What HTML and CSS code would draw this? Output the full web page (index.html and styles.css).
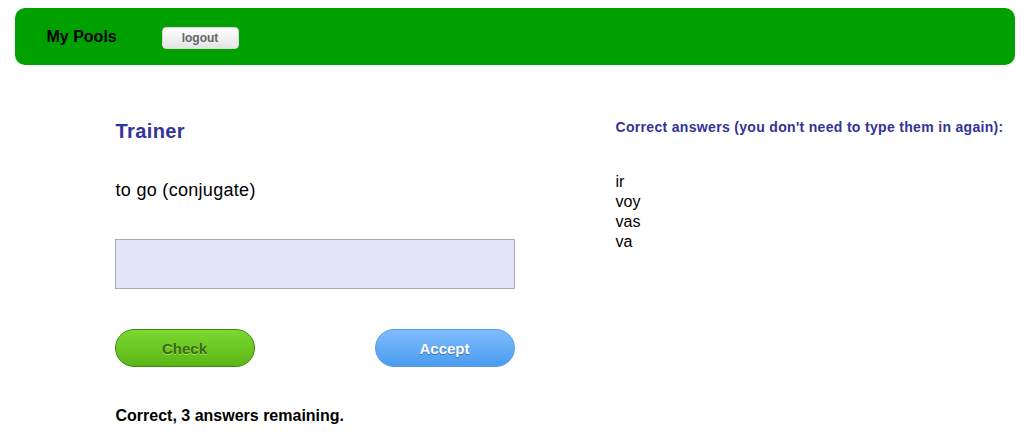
FILE: index.html
```html
<!DOCTYPE html>
<html>
<head>
<meta charset="utf-8">
<link rel="stylesheet" href="styles.css">
</head>
<body>
<div class="header">
  <span class="brand">My Pools</span>
  <button class="logout">logout</button>
</div>
<div class="main">
  <div class="left">
    <h1 class="title">Trainer</h1>
    <p class="question">to go (conjugate)</p>
    <div class="answer"></div>
    <div class="buttons">
      <button class="btn check">Check</button>
      <button class="btn accept">Accept</button>
    </div>
    <p class="status">Correct, 3 answers remaining.</p>
  </div>
  <div class="right">
    <h2 class="subtitle">Correct answers (you don't need to type them in again):</h2>
    <ul class="answers">
      <li>ir</li>
      <li>voy</li>
      <li>vas</li>
      <li>va</li>
    </ul>
  </div>
</div>
</body>
</html>
```
FILE: styles.css
```css
* { box-sizing: border-box; }
body {
  margin: 8px 0 0 0;
  font-family: "Liberation Sans", Arial, sans-serif;
  background: #fff;
  color: #000;
}
.header {
  width: 1000px;
  height: 57px;
  margin: 0 auto;
  background: #00a000;
  border-radius: 10px;
  display: flex;
  align-items: center;
  padding-left: 32px;
}
.brand {
  font-weight: bold;
  font-size: 16px;
  width: 115px;
}
.logout {
  width: 77px;
  height: 22px;
  border: 1px solid #d8d8d8;
  border-radius: 4px;
  background: linear-gradient(#ffffff, #e4e4e4);
  color: #666;
  font-family: "Liberation Sans", Arial, sans-serif;
  font-weight: bold;
  font-size: 12px;
  padding: 0;
  margin-top: 3px;
}
.main {
  width: 1000px;
  margin: 0 auto;
  display: flex;
  padding-left: 100px;
}
.left {
  width: 500px;
}
.title {
  margin: 55px 0 0 1px;
  font-size: 20px;
  color: #333399;
  line-height: 23px;
  letter-spacing: 0.4px;
}
.question {
  margin: 37px 0 0 1px;
  font-size: 18px;
  line-height: 21px;
  letter-spacing: 0.3px;
}
.answer {
  width: 400px;
  height: 50px;
  margin-top: 38px;
  background: #e4e4f8;
  border: 1px solid #aaa;
}
.buttons {
  width: 400px;
  display: flex;
  justify-content: space-between;
  margin-top: 40px;
}
.btn {
  width: 140px;
  height: 38px;
  border-radius: 19px;
  font-family: "Liberation Sans", Arial, sans-serif;
  font-weight: bold;
  font-size: 15px;
  padding: 0;
}
.check {
  background: linear-gradient(#7bd92f, #5cb516);
  border: 1px solid #3d8a0a;
  color: #3c6a12;
  text-shadow: 0 1px 0 #a4e060;
}
.accept {
  background: linear-gradient(#7fbcfc, #4a9cf0);
  border: 1px solid #5a9be0;
  color: #fff;
  text-shadow: 0 1px 1px #3d6fa8;
}
.status {
  margin: 40px 0 0 1px;
  font-weight: bold;
  font-size: 16px;
  line-height: 18px;
}
.right {
  padding-left: 1px;
}
.subtitle {
  margin: 54px 0 0 0;
  font-size: 14px;
  color: #333399;
  line-height: 16px;
  letter-spacing: 0.32px;
}
.answers {
  list-style: none;
  margin: 37px 0 0 0;
  padding: 0;
  font-size: 16px;
  line-height: 20px;
}
```
